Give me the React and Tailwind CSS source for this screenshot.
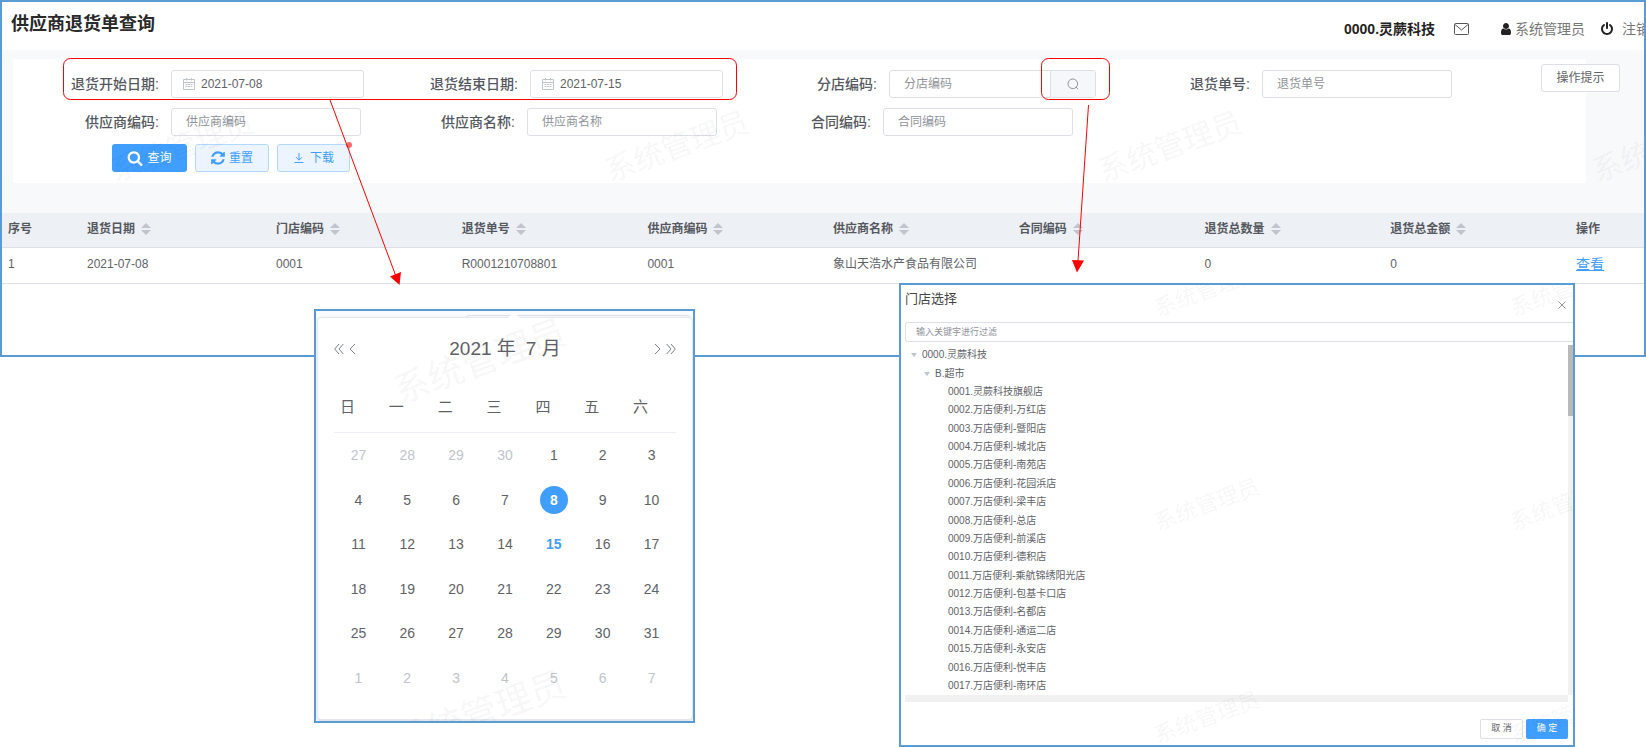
import { useState } from 'react'

const COLUMNS = [
  { key: 'index', label: '序号', sortable: false },
  { key: 'date', label: '退货日期', sortable: true },
  { key: 'store', label: '门店编码', sortable: true },
  { key: 'orderNo', label: '退货单号', sortable: true },
  { key: 'supplierCode', label: '供应商编码', sortable: true },
  { key: 'supplierName', label: '供应商名称', sortable: true },
  { key: 'contract', label: '合同编码', sortable: true },
  { key: 'totalQty', label: '退货总数量', sortable: true },
  { key: 'totalAmount', label: '退货总金额', sortable: true },
  { key: 'action', label: '操作', sortable: false },
]

const ROWS = [
  {
    index: 1,
    date: '2021-07-08',
    store: '0001',
    orderNo: 'R0001210708801',
    supplierCode: '0001',
    supplierName: '象山天浩水产食品有限公司',
    contract: '',
    totalQty: 0,
    totalAmount: 0,
  },
]

const WEEKDAYS = ['日', '一', '二', '三', '四', '五', '六']

const WEEKS = [
  [27, 28, 29, 30, 1, 2, 3],
  [4, 5, 6, 7, 8, 9, 10],
  [11, 12, 13, 14, 15, 16, 17],
  [18, 19, 20, 21, 22, 23, 24],
  [25, 26, 27, 28, 29, 30, 31],
  [1, 2, 3, 4, 5, 6, 7],
]

const STORES = [
  '0001.灵蕨科技旗舰店',
  '0002.万店便利-万红店',
  '0003.万店便利-暨阳店',
  '0004.万店便利-城北店',
  '0005.万店便利-南苑店',
  '0006.万店便利-花园浜店',
  '0007.万店便利-梁丰店',
  '0008.万店便利-总店',
  '0009.万店便利-前溪店',
  '0010.万店便利-德积店',
  '0011.万店便利-乘航锦绣阳光店',
  '0012.万店便利-包基卡口店',
  '0013.万店便利-名都店',
  '0014.万店便利-通运二店',
  '0015.万店便利-永安店',
  '0016.万店便利-悦丰店',
  '0017.万店便利-南环店',
]

/* ---------- icons ---------- */

function SearchSolid() {
  return (
    <svg viewBox="0 0 1664 1792" className="h-4 w-4" fill="currentColor">
      <path d="M1152 832q0-185-131.5-316.5t-316.5-131.5-316.5 131.5-131.5 316.5 131.5 316.5 316.5 131.5 316.5-131.5 131.5-316.5zm512 832q0 52-38 90t-90 38q-54 0-90-38l-343-342q-179 124-399 124-143 0-273.5-55.5t-225-150-150-225-55.5-273.5 55.5-273.5 150-225 225-150 273.5-55.5 273.5 55.5 225 150 150 225 55.5 273.5q0 220-124 399l343 343q37 37 37 90z" />
    </svg>
  )
}

function RefreshIcon() {
  return (
    <svg viewBox="0 0 1536 1792" className="h-4 w-[14px]" fill="currentColor">
      <path d="M1511 1056q0 5-1 7-64 268-268 434.5t-478 166.5q-146 0-282.5-55t-243.5-157l-129 129q-19 19-45 19t-45-19-19-45v-448q0-26 19-45t45-19h448q26 0 45 19t19 45-19 45l-137 137q71 66 161 102t187 36q134 0 250-65t186-179q11-17 53-117 8-23 30-23h192q13 0 22.5 9.5t9.5 22.5zm25-800v448q0 26-19 45t-45 19h-448q-26 0-45-19t-19-45 19-45l138-138q-148-137-349-137-134 0-250 65t-186 179q-11 17-53 117-8 23-30 23h-199q-13 0-22.5-9.5t-9.5-22.5v-7q65-268 270-434.5t480-166.5q146 0 284 55.5t245 156.5l130-129q19-19 45-19t45 19 19 45z" />
    </svg>
  )
}

function UserIcon() {
  return (
    <svg viewBox="0 0 1280 1792" className="h-[14px] w-[10px]" fill="#222">
      <path d="M1280 1399q0 109-62.5 187t-150.5 78h-854q-88 0-150.5-78t-62.5-187q0-85 8.5-160.5t31.5-152 58.5-131 94-89 134.5-34.5q131 128 313 128t313-128q76 0 134.5 34.5t94 89 58.5 131 31.5 152 8.5 160.5zm-256-887q0 159-112.5 271.5t-271.5 112.5-271.5-112.5-112.5-271.5 112.5-271.5 271.5-112.5 271.5 112.5 112.5 271.5z" />
    </svg>
  )
}

function PowerIcon() {
  return (
    <svg viewBox="0 0 1536 1792" className="h-[14px] w-3" fill="#222">
      <path d="M1536 896q0 156-61 298t-164 245-245 164-298 61-298-61-245-164-164-245-61-298q0-182 80.5-343t226.5-270q43-32 95.5-25t83.5 50q32 42 24.5 94.5t-49.5 84.5q-98 74-151.5 181t-53.5 228q0 104 40.5 198.5t109.5 163.5 163.5 109.5 198.5 40.5 198.5-40.5 163.5-109.5 109.5-163.5 40.5-198.5q0-121-53.5-228t-151.5-181q-42-32-49.5-84.5t24.5-94.5q31-43 84-50t95 25q146 109 226.5 270t80.5 343zm-640-768v640q0 52-38 90t-90 38-90-38-38-90v-640q0-52 38-90t90-38 90 38 38 90z" />
    </svg>
  )
}

function MailIcon() {
  return (
    <svg viewBox="0 0 15 12" className="h-3 w-[15px]" fill="none" stroke="#555">
      <rect x="0.5" y="0.5" width="14" height="11" rx="1" />
      <path d="M1 1.5 7.5 7 14 1.5" />
    </svg>
  )
}

function CalendarIcon() {
  return (
    <svg viewBox="0 0 12 12" className="h-3 w-3 shrink-0" fill="none" stroke="#c0c4cc">
      <path d="M0.5 1.5h11v10h-11zM0.5 4.5h11M3.5 0v2.5M8.5 0v2.5" />
      <path d="M2.5 6.5h7M2.5 8.5h7" strokeDasharray="2 0.6" />
    </svg>
  )
}

function SearchOutline() {
  return (
    <svg viewBox="0 0 12 12" className="h-3 w-3" fill="none" stroke="#909399">
      <circle cx="5.8" cy="5.8" r="4.8" />
      <path d="m9 9 2 2.2" />
    </svg>
  )
}

function DownloadIcon() {
  return (
    <svg viewBox="0 0 12 12" className="h-3 w-3" fill="none" stroke="currentColor">
      <path d="M6 1v7M3 5.2 6 8.2l3-3M1.5 10.5h9" />
    </svg>
  )
}

function SortCaret() {
  return (
    <svg viewBox="0 0 10 12" className="h-3 w-[10px]" fill="#c0c4cc">
      <path d="M5 0l5 5H0zM5 12l5-5H0z" />
    </svg>
  )
}

function TreeCaret() {
  return (
    <svg viewBox="0 0 6 4" className="h-1 w-[6px]" fill="#c0c4cc">
      <path d="M0 0h6L3 4z" />
    </svg>
  )
}

function Chevron({ double = false, right = false }) {
  return (
    <svg
      viewBox="0 0 10 12"
      className={`h-3 w-[10px] ${right ? 'rotate-180' : ''}`}
      fill="none"
      stroke="#7d8087"
    >
      {double ? <path d="M5 1 0.7 6 5 11M9.3 1 5 6l4.3 5" /> : <path d="M7 1 2 6l5 5" />}
    </svg>
  )
}

/* ---------- form pieces ---------- */

function Field({ id, label, children }) {
  return (
    <div className="flex items-center">
      <label htmlFor={id} className="w-[158px] shrink-0 pr-3 text-right text-sm font-medium text-[#55585e]">
        {label}:
      </label>
      {children}
    </div>
  )
}

function DateInput({ id, value }) {
  return (
    <div className="flex h-7 w-[193px] items-center gap-1.5 rounded-[3px] border border-[#dcdfe6] bg-white pl-[11px]">
      <CalendarIcon />
      <input id={id} defaultValue={value} className="w-full min-w-0 bg-transparent text-xs text-[#606266] outline-none" />
    </div>
  )
}

function TextInput({ id, placeholder }) {
  return (
    <input
      id={id}
      placeholder={placeholder}
      className="h-7 w-[190px] rounded-[3px] border border-[#dcdfe6] bg-white px-[14px] text-xs text-[#606266] outline-none placeholder:text-[#909399]"
    />
  )
}

const MARK_SIZES = {
  sm: 'text-[22px]',
  md: 'text-[30px]',
  lg: 'text-[36px]',
}

// Faint user name repeated over a panel; x and y are the centre of each mark.
function Watermark({ marks, size }) {
  return (
    <div className="pointer-events-none absolute inset-0 overflow-hidden" aria-hidden="true">
      {marks.map(([x, y]) => (
        <span
          key={`${x}-${y}`}
          className={`absolute -translate-x-1/2 -translate-y-1/2 -rotate-20 leading-none whitespace-nowrap text-black/5 ${MARK_SIZES[size]}`}
          style={{ left: x, top: y }}
        >
          系统管理员
        </span>
      ))}
    </div>
  )
}

/* ---------- sections ---------- */

function TopBar() {
  return (
    <header className="flex h-12 items-center justify-between bg-white pl-[9px]">
      <h1 className="pb-1 text-lg leading-none font-bold text-[#2a2a2a]">供应商退货单查询</h1>
      <div className="flex h-full w-[300px] shrink-0 items-center overflow-hidden pt-1.5 text-sm whitespace-nowrap text-[#777]">
        <span className="w-[110px] shrink-0 font-bold text-[#222]">0000.灵蕨科技</span>
        <button type="button" aria-label="消息" className="mr-8 shrink-0">
          <MailIcon />
        </button>
        <a href="#user" className="mr-4 flex shrink-0 items-center gap-1">
          <UserIcon />
          系统管理员
        </a>
        <a href="#logout" className="flex shrink-0 items-center gap-[9px]">
          <PowerIcon />
          注销
        </a>
      </div>
    </header>
  )
}

function FilterForm() {
  return (
    <div className="flex bg-[#f8f9fb] pt-[9px] pb-[30px] pl-[11px]">
      <form className="flex-1 bg-white pt-[11px] pb-[11px]" onSubmit={(e) => e.preventDefault()}>
        <div className="flex gap-2">
          <Field id="startDate" label="退货开始日期">
            <DateInput id="startDate" value="2021-07-08" />
          </Field>
          <Field id="endDate" label="退货结束日期">
            <DateInput id="endDate" value="2021-07-15" />
          </Field>
          <Field id="branch" label="分店编码">
            <div className="flex h-7 w-[207px] overflow-hidden rounded-[3px] border border-[#dcdfe6]">
              <input
                id="branch"
                placeholder="分店编码"
                className="min-w-0 flex-1 px-[14px] text-xs text-[#606266] outline-none placeholder:text-[#909399]"
              />
              <button
                type="button"
                aria-label="选择门店"
                className="flex w-[45px] items-center justify-center border-l border-[#dcdfe6] bg-[#f5f7fa]"
              >
                <SearchOutline />
              </button>
            </div>
          </Field>
          <Field id="orderNo" label="退货单号">
            <TextInput id="orderNo" placeholder="退货单号" />
          </Field>
        </div>

        <div className="mt-[10px] flex gap-2">
          <Field id="supplierCode" label="供应商编码">
            <TextInput id="supplierCode" placeholder="供应商编码" />
          </Field>
          <Field id="supplierName" label="供应商名称">
            <TextInput id="supplierName" placeholder="供应商名称" />
          </Field>
          <Field id="contract" label="合同编码">
            <TextInput id="contract" placeholder="合同编码" />
          </Field>
        </div>

        <div className="mt-2 flex gap-2 pl-[99px]">
          <button
            type="submit"
            className="flex h-7 w-[75px] items-center justify-center gap-1 rounded-[3px] bg-[#409eff] text-xs text-white"
          >
            <SearchSolid />
            查询
          </button>
          <button
            type="reset"
            className="flex h-7 w-[74px] items-center justify-center gap-1 rounded-[3px] border border-[#b3d8ff] bg-[#ecf5ff] text-xs text-[#409eff]"
          >
            <RefreshIcon />
            重置
          </button>
          <div className="relative">
            <button
              type="button"
              className="flex h-7 w-[73px] items-center justify-center gap-[5px] rounded-[3px] border border-[#b3d8ff] bg-[#ecf5ff] text-xs text-[#409eff]"
            >
              <DownloadIcon />
              下载
            </button>
            <span className="absolute -top-0.5 -right-0.5 h-1.5 w-1.5 rounded-full bg-[#f56c6c]" />
          </div>
        </div>
      </form>
      <div className="w-[58px]">
        <button
          type="button"
          className="mt-[5px] -ml-[45px] h-7 w-[79px] rounded-[3px] border border-[#dcdfe6] bg-white text-xs text-[#606266]"
        >
          操作提示
        </button>
      </div>
    </div>
  )
}

function ResultTable() {
  return (
    <table className="w-full table-fixed text-left text-xs text-[#606266]">
      <colgroup>
        <col className="w-[79px]" />
        <col className="w-[189px]" />
        <col span={7} />
        <col className="w-[74px]" />
      </colgroup>
      <thead>
        <tr className="h-[34px] border-b border-[#dcdfe6] bg-[#edf0f5]">
          {COLUMNS.map((col) => (
            <th key={col.key} className="pt-0 pb-0.5 pl-[6px] font-bold text-[#55585e]">
              <span className="flex items-center gap-1.5">
                {col.label}
                {col.sortable && <SortCaret />}
              </span>
            </th>
          ))}
        </tr>
      </thead>
      <tbody>
        {ROWS.map((row) => (
          <tr key={row.index} className="h-9 border-b border-[#dcdfe6] bg-white">
            {COLUMNS.map((col) => (
              <td key={col.key} className="pt-0 pb-0.5 pl-[6px] whitespace-nowrap">
                {col.key === 'action' ? (
                  <a href="#detail" className="text-sm text-[#409eff] underline">
                    查看
                  </a>
                ) : (
                  row[col.key]
                )}
              </td>
            ))}
          </tr>
        ))}
      </tbody>
    </table>
  )
}

function dayClass(week, day, selected) {
  if ((week === 0 && day > 7) || week === 5) return 'text-[#c0c4cc]'
  if (day === selected) return 'bg-[#409eff] font-bold text-white'
  if (day === 15) return 'font-bold text-[#409eff]'
  return 'text-[#606266]'
}

function CalendarPopup() {
  const [selected, setSelected] = useState(8)

  return (
    <section className="absolute top-[309px] left-[314px] h-[414px] w-[381px] overflow-hidden border-2 border-[#5b9bd5] bg-[#fafbfc] pt-[6px] pl-px">
      <div className="absolute top-1 right-[2px] h-4 w-[226px] rounded-t border border-[#dcdfe6]" />
      <div className="relative h-[403px] w-[376px] rounded border border-[#e4e7ed] bg-white px-4 shadow-sm">
        <svg viewBox="0 0 14 7" className="absolute -top-[6px] left-[189px] h-[7px] w-[14px]">
          <path d="M0 7 7 0l7 7z" fill="#fff" />
        </svg>
        <div className="flex h-[62px] items-center justify-between">
          <div className="flex gap-1">
            <button type="button" aria-label="上一年">
              <Chevron double />
            </button>
            <button type="button" aria-label="上个月">
              <Chevron />
            </button>
          </div>
          <div className="flex gap-[10px] text-[19px] text-[#606266]">
            <span>2021 年</span>
            <span>7 月</span>
          </div>
          <div className="flex gap-1">
            <button type="button" aria-label="下个月">
              <Chevron right />
            </button>
            <button type="button" aria-label="下一年">
              <Chevron double right />
            </button>
          </div>
        </div>
        <table className="mt-[10px] h-[310px] w-full table-fixed">
          <thead>
            <tr className="h-[42px] border-b border-[#ebeef5]">
              {WEEKDAYS.map((d) => (
                <th key={d} className="pt-0 pb-2 pl-[6px] text-left text-[15px] leading-none font-normal text-[#606266]">
                  {d}
                </th>
              ))}
            </tr>
          </thead>
          <tbody>
            {WEEKS.map((days, week) => (
              <tr key={week}>
                {days.map((day) => (
                  <td key={day} className="p-0 text-center align-middle">
                    <button
                      type="button"
                      onClick={() => setSelected(day)}
                      className={`inline-flex h-7 w-7 items-center justify-center rounded-full align-middle text-sm ${dayClass(week, day, selected)}`}
                    >
                      {day}
                    </button>
                  </td>
                ))}
              </tr>
            ))}
          </tbody>
        </table>
      </div>
      <Watermark size="lg" marks={[[164, 51], [164, 403]]} />
    </section>
  )
}

function StoreDialog() {
  return (
    <section
      role="dialog"
      aria-label="门店选择"
      className="absolute top-[283px] left-[899px] flex h-[464px] w-[676px] flex-col overflow-hidden border-2 border-[#5b9bd5] bg-white pl-1"
    >
      <div className="flex h-[37px] items-start justify-between pt-1 pr-[7px]">
        <h2 className="text-[13px] leading-5 text-[#444]">门店选择</h2>
        <button type="button" aria-label="关闭" className="mt-3">
          <svg viewBox="0 0 8 8" className="h-2 w-2" fill="none" stroke="#909399">
            <path d="m0.5 0.5 7 7M7.5 0.5l-7 7" />
          </svg>
        </button>
      </div>
      <input
        aria-label="输入关键字进行过滤"
        placeholder="输入关键字进行过滤"
        className="h-5 w-full shrink-0 rounded-l-[3px] border border-r-0 border-[#dcdfe6] px-[10px] text-[9px] text-[#606266] outline-none placeholder:text-[#909399]"
      />

      <div className="mt-[3px] flex h-[350px] shrink-0">
        <ul className="flex flex-1 flex-col pt-px text-[10px] leading-none text-[#606266]">
          <li className="flex flex-1 items-center gap-[5px] pl-[6px]">
            <TreeCaret />
            0000.灵蕨科技
          </li>
          <li className="flex flex-1 items-center gap-[5px] pl-[19px]">
            <TreeCaret />
            B.超市
          </li>
          {STORES.map((store) => (
            <li key={store} className="flex flex-1 items-center pl-[43px]">
              {store}
            </li>
          ))}
        </ul>
        <div className="w-[5px] bg-[#f1f1f1]">
          <div className="h-[71px] bg-[#b9b9b9]" />
        </div>
      </div>
      <div className="mr-[5px] h-[7px] shrink-0 bg-[#f1f1f1]" />

      <div className="mt-[17px] flex justify-end gap-[3px] pr-[5px] text-[9px]">
        <button type="button" className="h-5 w-[43px] rounded-[2px] border border-[#dcdfe6] bg-white text-[#606266]">
          取 消
        </button>
        <button type="button" className="h-5 w-[42px] rounded-[2px] bg-[#409eff] text-white">
          确 定
        </button>
      </div>
      <Watermark
        size="sm"
        marks={[[306, 6], [662, 6], [306, 220], [662, 220], [306, 433], [662, 433]]}
      />
    </section>
  )
}

// Red call-outs linking the form controls to their popups.
function Annotations() {
  return (
    <svg
      className="pointer-events-none absolute top-0 left-0 h-[747px] w-[1646px]"
      viewBox="0 0 1646 747"
      fill="none"
      stroke="#f00"
      aria-hidden="true"
    >
      <rect x="63.5" y="58.5" width="673" height="41" rx="7" />
      <rect x="1041.5" y="58.5" width="68" height="41" rx="7" />
      <path d="M330 100 395.500 275M1088.500 105 1078 261" />
      <path d="M390 276.500 401 272l-1.500 13zM1072 260l12 0.500-7 12z" fill="#f00" stroke="none" />
    </svg>
  )
}

export default function App() {
  return (
    <div className="relative min-h-screen overflow-hidden bg-white font-['Liberation_Sans','Noto_Sans_CJK_SC',sans-serif]">
      <main className="relative border-2 border-[#5b9bd5] pb-[71px]">
        <TopBar />
        <FilterForm />
        <ResultTable />
        <Watermark size="md" marks={[[180, 145], [675, 145], [1168, 145], [1662, 145]]} />
      </main>
      <CalendarPopup />
      <StoreDialog />
      <Annotations />
    </div>
  )
}
